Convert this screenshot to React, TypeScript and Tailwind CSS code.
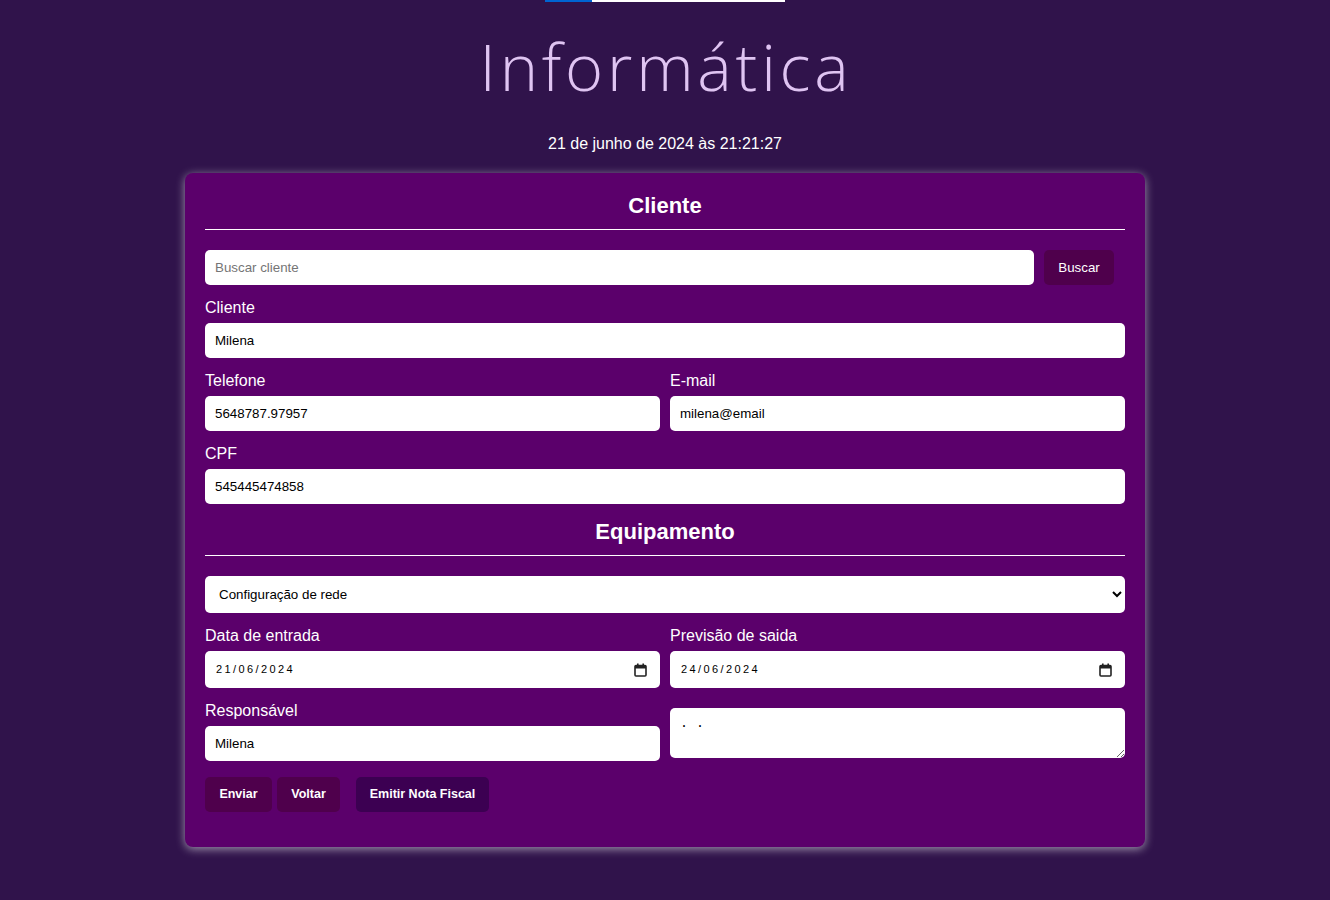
import { useState } from 'react';

const inputCls =
  'h-[35px] rounded-[5px] bg-white px-[10px] text-[13.33px] text-black outline-none placeholder:text-[#757575]';

const Field = ({ label, value }: { label: string; value: string }) => (
  <div className="flex flex-col">
    <label className="mb-[6px] text-[16px] leading-[18px] text-white">{label}</label>
    <input className={inputCls + ' w-full'} defaultValue={value} />
  </div>
);

const CalendarIcon = () => (
  <svg width="13" height="14" viewBox="0 0 13 14" fill="none">
    <rect x="1" y="2.5" width="11" height="10.5" rx="1" stroke="#222" strokeWidth="1.6" />
    <rect x="1" y="2.5" width="11" height="3" fill="#222" />
    <rect x="3" y="0.5" width="1.6" height="2.5" fill="#222" />
    <rect x="8.4" y="0.5" width="1.6" height="2.5" fill="#222" />
  </svg>
);

// date box drawn by hand so the day/month order stays dd/mm/yyyy
const DateField = ({ label, value }: { label: string; value: string }) => (
  <div className="flex flex-col">
    <label className="mb-[6px] text-[16px] leading-[18px] text-white">{label}</label>
    <div className="flex h-[37px] w-full items-center rounded-[5px] bg-white pl-[11px] pr-[13px]">
      <input
        className="min-w-0 flex-1 bg-transparent text-[11px] tracking-[2.4px] text-black outline-none"
        defaultValue={value}
      />
      <CalendarIcon />
    </div>
  </div>
);

const SectionTitle = ({ children }: { children: string }) => (
  <div>
    <h2 className="text-center text-[22px] font-bold leading-[25px] text-white">{children}</h2>
    <div className="mt-[11px] h-px w-full bg-white" />
  </div>
);

const btnCls = 'h-[35px] rounded-[5px] text-[12.5px] font-bold text-white';

export default function App() {
  const [search, setSearch] = useState('');

  return (
    <div
      className="min-h-[900px] w-full bg-[#30134b] pb-10"
      style={{ fontFamily: '"Liberation Sans", Arial, sans-serif' }}
    >
      {/* top progress */}
      <div className="flex justify-center">
        <div className="flex h-[2px] w-[240px] bg-white">
          <div className="h-full w-[47px] bg-[#0064d2]" />
        </div>
      </div>

      <h1
        className="mt-[24px] pl-[2px] text-center text-[65px] font-light leading-[80px] tracking-[3.8px] text-[#dfc4f2]"
        style={{ fontFamily: '"Open Sans", Lato, sans-serif' }}
      >
        Informática
      </h1>

      <p className="mt-[29px] text-center text-[16px] leading-[18px] text-white">
        21 de junho de 2024 às 21:21:27
      </p>

      <div className="mx-auto mt-[20px] w-[960px] rounded-[8px] bg-[#5b006b] px-5 pt-5 pb-[35px] shadow-[0_2px_10px_rgba(255,255,255,0.55)]">
        <SectionTitle>Cliente</SectionTitle>

        <div className="mt-5 flex items-center">
          <input
            className={inputCls + ' w-[829px] flex-none'}
            placeholder="Buscar cliente"
            value={search}
            onChange={(e) => setSearch(e.target.value)}
          />
          <button className="ml-[10px] h-[35px] w-[70px] rounded-[5px] bg-[#4f004c] text-[13.33px] text-white">
            Buscar
          </button>
        </div>

        <div className="mt-[14px]">
          <Field label="Cliente" value="Milena" />
        </div>

        <div className="mt-[14px] grid grid-cols-2 gap-x-[10px]">
          <Field label="Telefone" value="5648787.97957" />
          <Field label="E-mail" value="milena@email" />
        </div>

        <div className="mt-[14px]">
          <Field label="CPF" value="545445474858" />
        </div>

        <div className="mt-[15px]">
          <SectionTitle>Equipamento</SectionTitle>
        </div>

        <select className="mt-5 h-[37px] w-full rounded-[5px] bg-white px-[10px] text-[13.33px] text-black outline-none">
          <option>Configuração de rede</option>
          <option>Formatação</option>
          <option>Manutenção</option>
        </select>

        <div className="mt-[14px] grid grid-cols-2 gap-x-[10px]">
          <DateField label="Data de entrada" value="21/06/2024" />
          <DateField label="Previsão de saida" value="24/06/2024" />
        </div>

        <div className="mt-[14px] grid grid-cols-2 items-start gap-x-[10px]">
          <Field label="Responsável" value="Milena" />
          <textarea
            className="mt-[6px] h-[50px] w-full rounded-[5px] bg-white px-[10px] py-[8px] text-[13.33px] leading-[16px] text-black outline-none"
            style={{ fontFamily: '"Liberation Mono", monospace' }}
            defaultValue=". ."
          />
        </div>

        <div className="mt-4 flex items-center">
          <button className={btnCls + ' w-[67px] bg-[#4f004c]'}>Enviar</button>
          <button className={btnCls + ' ml-[5px] w-[63px] bg-[#4f004c]'}>Voltar</button>
          <button className={btnCls + ' ml-4 w-[133px] bg-[#3c0052]'}>Emitir Nota Fiscal</button>
        </div>
      </div>
    </div>
  );
}
